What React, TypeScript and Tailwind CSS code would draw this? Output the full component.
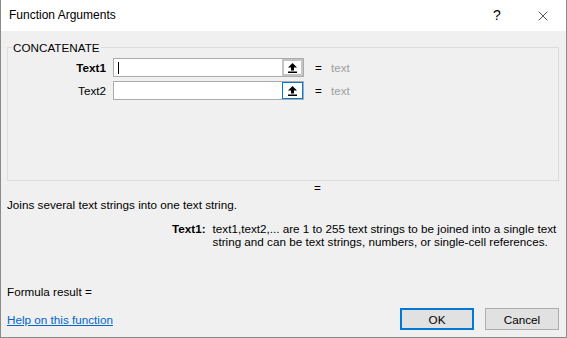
import { X } from 'lucide-react';

function RefArrow() {
  return (
    <svg width="9" height="10" viewBox="0 0 9 10" className="block">
      <path d="M4.5 0 L9 4.5 L6 4.5 L6 7.5 L3 7.5 L3 4.5 L0 4.5 Z" fill="#000" />
      <rect x="0" y="8.5" width="9" height="1.5" fill="#000" />
    </svg>
  );
}

function ArgRow({ label, bold, active }: { label: string; bold?: boolean; active?: boolean }) {
  return (
    <div className="flex items-center h-[19px]">
      <div className={`w-[99px] text-right pr-[1px] ${bold ? 'font-bold' : ''}`}>{label}</div>
      <div className="ml-[6px] w-[191px] h-[19px] flex bg-white border border-[#acacac]">
        <div className="flex-1 flex items-center pl-[4px]">
          {active && <div className="w-px h-[12px] bg-black" />}
        </div>
        <div
          className={`w-[21px] h-full flex items-center justify-center bg-white ${
            active ? 'border-2 border-[#c4c4c4]' : 'border border-[#0078d7]'
          }`}
        >
          <RefArrow />
        </div>
      </div>
      <div className="ml-[11px] w-[6px] text-center">=</div>
      <div className="ml-[10px] text-[#a0a0a0]">text</div>
    </div>
  );
}

export default function App() {
  return (
    <div className="w-[567px] h-[338px] flex flex-col bg-[#f0f0f0] border-x border-b border-[#8a8a8a] font-['Liberation_Sans',sans-serif] text-[11.7px] leading-[13px] text-black">
      {/* Title bar */}
      <div className="h-[31px] shrink-0 flex items-center bg-white">
        <span className="ml-[8px] text-[12px]">Function Arguments</span>
        <div className="ml-auto flex items-center">
          <span className="w-[46px] text-center text-[14px]">?</span>
          <span className="w-[46px] flex justify-center">
            <X size={16} strokeWidth={1} />
          </span>
        </div>
      </div>

      <div className="flex flex-col px-[6px]">
        {/* Arguments group */}
        <fieldset className="mt-[10px] h-[140px] border border-[#dcdcdc] mr-[1px]">
          <legend className="ml-[4px] px-[1px]">CONCATENATE</legend>
          <div className="mt-[4px] flex flex-col gap-[4px]">
            <ArgRow label="Text1" bold active />
            <ArgRow label="Text2" />
          </div>
        </fieldset>

        <div className="ml-[307px] w-[6px] text-center">=</div>
        <div className="mt-[4px]">Joins several text strings into one text string.</div>

        <div className="mt-[11px] flex">
          <div className="w-[200px] text-right font-bold">Text1:</div>
          <div className="ml-[7px] w-[350px]">
            text1,text2,... are 1 to 255 text strings to be joined into a single text string and can be text
            strings, numbers, or single-cell references.
          </div>
        </div>

        <div className="mt-[37px]">Formula result =</div>

        <div className="mt-[10px] flex items-center">
          <a href="#" className="text-[#0066cc] underline">
            Help on this function
          </a>
          <button className="ml-auto w-[74px] h-[22px] bg-[#e1e1e1] border-2 border-[#0078d7]">OK</button>
          <button className="ml-[11px] mr-[1px] w-[74px] h-[22px] bg-[#e1e1e1] border border-[#adadad]">
            Cancel
          </button>
        </div>
      </div>
    </div>
  );
}
